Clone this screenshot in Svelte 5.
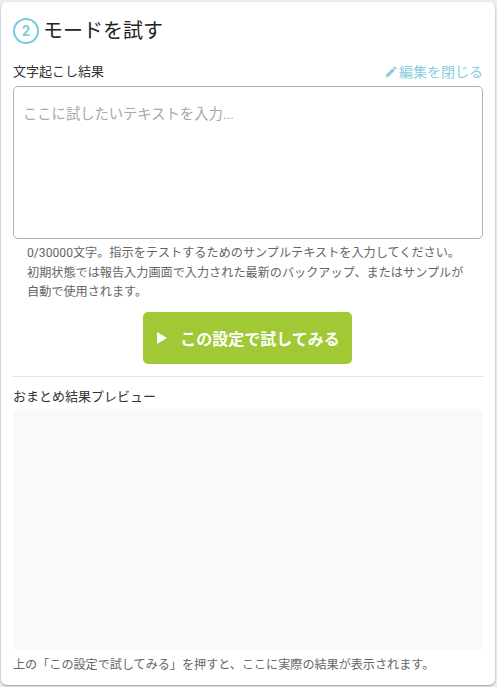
<script>
  let text = $state("");
</script>

<div class="page">
  <section class="card">
    <h2 class="heading">
      <span class="step">2</span>
      <span>モードを試す</span>
    </h2>

    <div class="label-row">
      <span class="label">文字起こし結果</span>
      <button class="edit-link" type="button">
        <svg viewBox="0 0 16 16" width="12" height="12" aria-hidden="true">
          <path d="M12.2 0.8a1 1 0 0 1 1.4 0l1.6 1.6a1 1 0 0 1 0 1.4l-1.3 1.3-3-3z" fill="currentColor" />
          <path d="M10.1 2.9l3 3L5 14l-4 1.2L2 11z" fill="currentColor" />
        </svg>
        編集を閉じる
      </button>
    </div>

    <textarea class="input" bind:value={text} placeholder="ここに試したいテキストを入力..."></textarea>

    <p class="hint">
      {text.length}/30000文字。指示をテストするためのサンプルテキストを入力してください。<br />
      初期状態では報告入力画面で入力された最新のバックアップ、またはサンプルが<br />
      自動で使用されます。
    </p>

    <div class="action">
      <button class="try" type="button">
        <svg viewBox="0 0 10 12" width="10" height="12" aria-hidden="true">
          <path d="M0 0l10 6-10 6z" fill="currentColor" />
        </svg>
        この設定で試してみる
      </button>
    </div>

    <hr class="divider" />

    <div class="label">おまとめ結果プレビュー</div>
    <div class="preview"></div>
    <p class="note">上の「この設定で試してみる」を押すと、ここに実際の結果が表示されます。</p>
  </section>
</div>

<style>
  :global(body) {
    margin: 0;
    background: #e8eff4;
    font-family: "Roboto", "Noto Sans CJK JP", sans-serif;
  }

  .page {
    height: 687px;
    padding: 2px 2px 2px 1px;
    box-sizing: border-box;
  }

  .card {
    height: 100%;
    box-sizing: border-box;
    background: #fff;
    border-radius: 6px;
    padding: 14px 12px 0 12px;
    box-shadow: 0 1px 2px rgba(0, 0, 0, 0.35);
    display: flex;
    flex-direction: column;
  }

  .heading {
    display: flex;
    align-items: center;
    gap: 4px;
    margin: 0;
    font-size: 20px;
    font-weight: 400;
    line-height: 30px;
    color: #222;
  }

  .step {
    width: 26px;
    height: 26px;
    box-sizing: border-box;
    border: 2px solid #76cbe0;
    border-radius: 50%;
    display: flex;
    align-items: center;
    justify-content: center;
    color: #76cbe0;
    font-size: 14px;
    font-weight: 700;
    line-height: 1;
  }

  .label-row {
    display: flex;
    justify-content: space-between;
    align-items: center;
    margin-top: 14px;
    height: 23px;
    margin-bottom: 3px;
  }

  .label {
    font-size: 13px;
    line-height: 20px;
    color: #333;
  }

  .edit-link {
    display: flex;
    align-items: center;
    gap: 2px;
    padding: 0;
    border: none;
    background: none;
    font: inherit;
    font-size: 14px;
    line-height: 20px;
    color: #8accdf;
    cursor: pointer;
  }

  .input {
    display: block;
    width: 100%;
    height: 153px;
    box-sizing: border-box;
    margin: 0;
    padding: 15px 9px;
    border: 1px solid #b4b4b4;
    border-radius: 5px;
    resize: none;
    outline: none;
    font: inherit;
    font-size: 14.3px;
    line-height: 24px;
    color: #333;
  }

  .input::placeholder {
    color: #a8a8a8;
    opacity: 1;
  }

  .hint {
    margin: 5px 0 0;
    padding-left: 14px;
    font-size: 12.15px;
    line-height: 19.6px;
    color: #666;
    white-space: nowrap;
  }

  .action {
    display: flex;
    justify-content: center;
    margin-top: 9px;
  }

  .try {
    width: 209px;
    height: 52px;
    margin-left: -2px;
    display: flex;
    align-items: center;
    justify-content: center;
    gap: 13px;
    padding: 0 0 0 3px;
    border: none;
    border-radius: 5px;
    background: #a0c935;
    color: #fff;
    font: inherit;
    font-size: 16px;
    font-weight: 700;
    cursor: pointer;
  }

  .divider {
    width: 100%;
    margin: 12px 0 10px;
    border: none;
    border-top: 1px solid #e2e2e2;
  }

  .preview {
    flex: 1;
    margin-top: 2px;
    background: #f9f9f9;
    border-radius: 5px;
  }

  .note {
    margin: 6px 0 11px;
    font-size: 12.1px;
    line-height: 18px;
    color: #666;
  }
</style>
